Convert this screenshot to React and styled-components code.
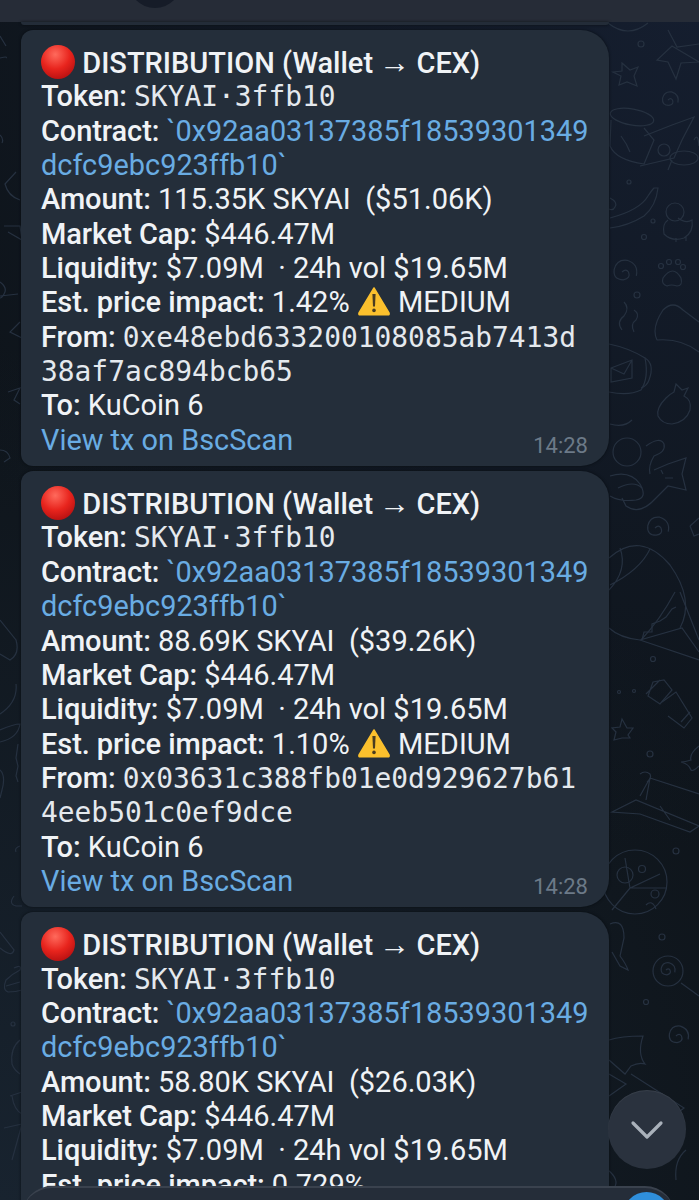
import React from "react";
import styled, { createGlobalStyle } from "styled-components";

const messages = [
  {
    id: 1,
    amount: "115.35K SKYAI",
    usd: "$51.06K",
    impact: "1.42%",
    level: "MEDIUM",
    from: ["0xe48ebd633200108085ab7413d", "38af7ac894bcb65"],
  },
  {
    id: 2,
    amount: "88.69K SKYAI",
    usd: "$39.26K",
    impact: "1.10%",
    level: "MEDIUM",
    from: ["0x03631c388fb01e0d929627b61", "4eeb501c0ef9dce"],
  },
  {
    id: 3,
    amount: "58.80K SKYAI",
    usd: "$26.03K",
    impact: "0.729%",
    level: "",
    from: ["0x03631c388fb01e0d929627b61", "4eeb501c0ef9dce"],
  },
];

function RedCircle() {
  return (
    <EmojiSvg viewBox="0 0 34 34" width="34" height="34">
      <defs>
        <radialGradient id="redBall" cx="42%" cy="28%" r="78%">
          <stop offset="0%" stopColor="#ff6a5c" />
          <stop offset="55%" stopColor="#e8241d" />
          <stop offset="100%" stopColor="#b30f10" />
        </radialGradient>
      </defs>
      <circle cx="17" cy="17" r="17" fill="url(#redBall)" />
    </EmojiSvg>
  );
}

function WarningSign() {
  return (
    <EmojiSvg viewBox="0 0 34 30" width="34" height="30" $warn>
      <path
        d="M17 2 L32 27 Q32.6 28.8 31 28.8 L3 28.8 Q1.4 28.8 2 27 Z"
        fill="#fbc02d"
        stroke="#fbc02d"
        strokeWidth="1.5"
        strokeLinejoin="round"
      />
      <path d="M15.4 8 h3.2 l-.6 12.5 h-2 Z" fill="#4a3c20" />
      <circle cx="17" cy="24.4" r="1.8" fill="#4a3c20" />
    </EmojiSvg>
  );
}

const swirl = (x, y, s) =>
  `M${x} ${y} q${3 * s} ${-3 * s} ${5 * s} 0 q${2 * s} ${5 * s} ${-4 * s} ${6 * s} q${-8 * s} 0 ${-7 * s} ${-8 * s} q${2 * s} ${-8 * s} ${10 * s} ${-7 * s} q${9 * s} ${3 * s} ${7 * s} ${12 * s}`;

function Doodles() {
  return (
    <DoodleSvg viewBox="0 0 699 1200" width="699" height="1200" fill="none">
      {/* top right: arc, stars, bucket with cat */}
      <path d="M608 23 q20 16 40 0" />
      <circle cx="641" cy="44" r="3" />
      <path d="M668 30 L677 47 L699 44 M699 62 L681 63 L676 79 L668 62 L657 60 L672 46 Z" />
      <path d="M622 63 L630 70 L638 67 L634 76 L637 86 L627 82 L619 85 L621 76 L613 72 L622 71 Z" />
      <path d={swirl(668, 100, 0.9)} />
      <ellipse cx="632" cy="117" rx="22" ry="8" transform="rotate(10 632 117)" />
      <path d="M611 120 L610 146 Q616 160 644 164 L654 140 L644 128" />
      <path d="M621 136 q6 8 9 16 M644 136 L672 125 L694 117 L682 140 L674 158 L640 166" />
      <circle cx="664" cy="150" r="6" />
      <ellipse cx="684" cy="158" rx="14" ry="7" />
      <path d="M694 140 q4 -8 5 6 M668 170 l4 -10" />
      <circle cx="629" cy="182" r="2" />
      {/* tube, duck, paw */}
      <path d="M610 218 q30 -8 38 -22 q4 -6 6 -8 l4 0 q-2 18 -14 28 q-16 10 -34 12" />
      <path d="M610 198 q8 4 5 9 q-2 4 -6 2" />
      <circle cx="653" cy="221" r="2" />
      <circle cx="644" cy="237" r="2.5" />
      <circle cx="675" cy="212" r="9" />
      <path d="M668 220 q-6 4 -4 14 q8 8 20 4 q10 -6 8 -18 q-6 4 -14 -2 M676 238 v4 M686 236 v5" />
      <path d={swirl(622, 272, 1.3)} />
      <circle cx="661" cy="266" r="2.5" />
      <circle cx="669" cy="262" r="2.5" />
      <circle cx="678" cy="262" r="2.5" />
      <circle cx="683" cy="267" r="2.5" />
      <path d="M663 278 q10 -14 18 0 q2 8 -4 8 q-6 -2 -10 0 q-6 -2 -4 -8 Z" />
      <circle cx="637" cy="295" r="3" />
      {/* hat, cup, strawberry */}
      <path d="M657 340 q-6 -12 6 -30 q10 -10 20 0 l16 12 M657 340 q24 -2 42 12" />
      <path d="M622 330 q-6 -8 2 -14 q6 -8 0 -14 M634 332 q-4 -8 2 -12 q4 -6 -2 -10" />
      <path d="M609 344 q20 4 36 14 q4 20 -4 32 q-12 6 -32 2" />
      <path d="M645 358 q10 6 4 22 q-2 6 -8 8" />
      <path d="M611 368 L632 360 L632 378 L611 382 Z M611 368 L624 374 L632 360" />
      <path d="M666 398 q-10 10 -8 18 q4 8 14 8 q14 -2 18 -14 q2 -10 -6 -14 l4 -8 -6 2 -6 -6 -2 8 q-4 2 -8 6 Z" />
      {/* astronaut planet and cat */}
      <circle cx="627" cy="452" r="14" />
      <path d="M610 424 q14 4 22 -4 M646 446 q14 -10 18 -2 q2 8 -10 12 q-6 10 -4 18" />
      <path d="M654 470 L668 464 L686 458 L682 474 L686 490 L668 486 L656 498 Q640 516 626 506 L622 498 M610 476 q20 -6 30 8 q8 14 -4 16 q-16 2 -26 -4" />
      <path d="M618 488 q16 -8 24 0 M661 470 l2 4 M665 478 h8" />
      <path d={swirl(655, 528, 1.2)} />
      <path d="M690 526 L699 518 M690 526 L694 536 L699 534" />
      {/* balloon */}
      <path d="M609 558 Q640 530 670 565 Q695 600 680 628" />
      <path d="M620 548 Q628 570 609 590 M650 549 Q640 570 610 585" />
      <path d="M609 628 Q620 638 640 640 L699 660 M640 640 L682 628 L699 652 M641 640 Q660 620 675 592" />
      <path d="M642 640 l2 -8 8 0 0 -8 8 -3 6 -4 6 -8 4 -2 M680 592 L699 640" />
      {/* flashlight */}
      <path d="M653 682 L664 680 L672 690 L660 704 L648 696 Z M646 694 L660 680" />
      <path d="M662 702 L676 692 L692 718 L684 728 L668 716" />
      <path d="M681 722 L690 712" />
      <circle cx="653" cy="659" r="2.5" />
      <circle cx="619" cy="692" r="1.5" />
      <circle cx="634" cy="691" r="1.5" />
      <path d="M622 719 L627 728 L633 728 L628 735 L630 738 L622 738 L614 740 L616 732 L612 728 L620 727 Z" />
      <circle cx="650" cy="754" r="3" />
      <path d="M699 746 q-10 8 -8 14 q-6 2 -10 2 q8 2 10 8 q2 2 8 -4" />
      <path d="M640 774 q5 -4 10 0 q2 5 -3 8 M650 778 L699 794 M640 796 L650 778 L646 800" />
      {/* pizza, lollipop, swirl */}
      <path d="M612 812 L636 800 L699 826 L690 832 L640 814 Z M660 806 l10 14" />
      <circle cx="635" cy="882" r="32" />
      <path d="M625 858 L630 888 L660 874 M630 888 L666 888 M630 888 L612 910" />
      <circle cx="642" cy="869" r="3.5" />
      <circle cx="655" cy="894" r="4" />
      <circle cx="625" cy="875" r="8" />
      <path d="M646 905 q6 -6 10 4" />
      <circle cx="676" cy="851" r="3" />
      <circle cx="662" cy="937" r="3" />
      <path d="M610 924 q14 -6 14 14 l-4 18 q6 8 8 14 L620 966 L612 952" />
      <circle cx="668" cy="971" r="15" />
      <path d={swirl(666, 970, 0.8)} />
      <path d="M681 983 L699 996" />
      <circle cx="646" cy="1002" r="2.5" />
      <path d={swirl(676, 1036, 1.1)} />
      <path d="M609 1040 q12 -4 34 -4 q-6 18 2 28 q-6 -2 -14 2 L625 1074 L609 1060" />
      <path d="M631 1074 L684 1108 L676 1114 M609 1074 L626 1084 L609 1096" />
      <path d="M686 1150 q-12 10 -10 30 M608 1170 q12 10 6 18" />
      {/* left strip */}
      <path d="M0 36 l6 10 M0 58 q8 -2 6 0 M0 135 q4 4 2 8" />
      <path d="M16 172 L5 184 Q8 196 20 200 M4 226 L20 226 L22 240 L8 232 M0 282 q8 6 4 12 q-2 4 -4 4 M0 296 L18 294" />
      <path d="M20 322 L10 332 L22 338 M8 392 L20 388 L14 400 L20 404 M0 450 q8 0 10 8 L4 462" />
      <path d="M0 620 L16 640 Q20 654 10 660 L0 654" />
      <path d="M16 684 q2 18 -16 30 M0 730 q14 -6 20 -6 q-2 14 -20 18" />
      <path d="M18 744 l-2 14 2 8 -2 10 2 6 M0 770 q6 6 2 20 L0 798" />
      <path d="M20 846 q-6 2 -4 6 M14 896 q-6 8 2 10 L22 906" />
      <path d="M0 932 L14 950 Q12 958 0 948" />
      <path d="M14 968 q8 -4 6 2 q-8 4 -14 10 q-4 10 2 12 q8 0 14 -2 M20 982 L6 986" />
      <circle cx="13" cy="1024" r="2" />
      <path d="M20 1040 q-10 8 -8 24 q2 6 8 10" />
      <path d="M10 1096 L22 1092 M12 1096 q2 14 10 18 M4 1128 L22 1124 L12 1160" />
    </DoodleSvg>
  );
}

export default function App() {
  return (
    <>
      <GlobalStyle />
      <Page>
        <Doodles />
        <TopBar>
          <TopAvatar />
        </TopBar>
        <MessageList>
          <PrevBubble />
          {messages.map((m) => (
            <Bubble key={m.id}>
              <Line $medium>
                <RedCircle /> DISTRIBUTION (Wallet <Arrow>→</Arrow> CEX)
              </Line>
              <Line>
                <Label>Token:</Label> <Mono>SKYAI·3ffb10</Mono>
              </Line>
              <Line>
                <Label>Contract:</Label>{" "}
                <LinkText>`0x92aa03137385f18539301349</LinkText>
              </Line>
              <Line>
                <LinkText>dcfc9ebc923ffb10`</LinkText>
              </Line>
              <Line>
                <Label>Amount:</Label> {m.amount} {"\u00a0"}({m.usd})
              </Line>
              <Line>
                <Label>Market Cap:</Label> $446.47M
              </Line>
              <Line>
                <Label>Liquidity:</Label> $7.09M {"\u00a0"}· 24h vol $19.65M
              </Line>
              <Line>
                <Label>Est. price impact:</Label> {m.impact}
                {m.level && (
                  <>
                    {" "}
                    <WarningSign /> {m.level}
                  </>
                )}
              </Line>
              <Line>
                <Label>From:</Label> <Mono>{m.from[0]}</Mono>
              </Line>
              <Line>
                <Mono>{m.from[1]}</Mono>
              </Line>
              <Line>
                <Label>To:</Label> KuCoin 6
              </Line>
              <Line>
                <LinkText>View tx on BscScan</LinkText>
              </Line>
              <Time>14:28</Time>
            </Bubble>
          ))}
        </MessageList>
        <ScrollDown>
          <svg width="34" height="24" viewBox="0 0 34 24" fill="none">
            <path
              d="M3 5 L17 19 L31 5"
              stroke="#a9b1ba"
              strokeWidth="3.2"
              strokeLinecap="round"
              strokeLinejoin="round"
            />
          </svg>
        </ScrollDown>
        <InputBar>
          <SendDot />
        </InputBar>
      </Page>
    </>
  );
}

const GlobalStyle = createGlobalStyle`
  html, body {
    margin: 0;
    padding: 0;
    background: #111820;
  }
`;

const Page = styled.div`
  position: relative;
  display: flex;
  flex-direction: column;
  width: 699px;
  height: 1200px;
  overflow: hidden;
  background:
    radial-gradient(circle 850px at 100% 0%, #151e2f 0%, rgba(21, 30, 47, 0) 100%),
    radial-gradient(circle 850px at 0% 100%, #18232f 0%, rgba(24, 35, 47, 0) 100%),
    #0e141a;
  font-family: Roboto, "Liberation Sans", sans-serif;
  font-size: 29px;
  color: #f0f3f6;
`;

const DoodleSvg = styled.svg`
  position: absolute;
  top: 0;
  left: 0;
  stroke: #263140;
  stroke-width: 1.2;
  filter: blur(0.4px);
`;

const TopBar = styled.header`
  position: relative;
  flex: none;
  display: flex;
  height: 22px;
  background: #262c37;
  overflow: hidden;
`;

const TopAvatar = styled.div`
  width: 54px;
  height: 54px;
  margin: -46px 0 0 128px;
  border-radius: 50%;
  background: #161c28;
`;

const MessageList = styled.main`
  position: relative;
  display: flex;
  flex-direction: column;
  gap: 5px;
  padding: 0 90px 0 21px;
`;

const PrevBubble = styled.div`
  flex: none;
  height: 3px;
  background: #232c38;
  border-radius: 0 0 12px 12px;
  box-shadow: 0 0 3px rgba(4, 8, 12, 0.7);
`;

const Bubble = styled.article`
  position: relative;
  flex: none;
  padding: 15px 20px 9px;
  background: #242e3a;
  border-radius: 12px 28px 28px 12px;
  box-shadow: 0 0 3px rgba(4, 8, 12, 0.7);
`;

const Line = styled.div`
  height: 34.35px;
  line-height: 34.35px;
  white-space: pre;
  font-weight: ${(p) => (p.$medium ? 500 : 400)};
`;

const Label = styled.span`
  font-weight: 500;
  letter-spacing: -0.08px;
`;

const Arrow = styled.span`
  font-family: "Liberation Sans", sans-serif;
  font-weight: 700;
  font-size: 31px;
  margin: 0 -1px;
`;

const Mono = styled.span`
  font-family: "DejaVu Sans Mono", "Liberation Mono", monospace;
  font-size: 27.9px;
  color: #e4e9ee;
`;

const LinkText = styled.span`
  color: #69ace3;
  font-size: 28.9px;
`;

const EmojiSvg = styled.svg`
  display: inline-block;
  vertical-align: ${(p) => (p.$warn ? "-4px" : "-6px")};
`;

const Time = styled.span`
  position: absolute;
  right: 21px;
  bottom: 7px;
  font-size: 22px;
  line-height: 26px;
  color: #6c7a88;
`;

const ScrollDown = styled.div`
  position: absolute;
  left: 608px;
  top: 1090px;
  display: flex;
  align-items: center;
  justify-content: center;
  width: 78px;
  height: 79px;
  border-radius: 50%;
  background: #2a323e;
  box-shadow: inset 0 1px 1px rgba(255, 255, 255, 0.07);
`;

const InputBar = styled.div`
  position: absolute;
  left: 22px;
  bottom: -40px;
  width: 653px;
  height: 52px;
  background: #252d39;
  border-top: 2px solid #3a424e;
  border-top-left-radius: 30px;
  border-top-right-radius: 30px;
  overflow: hidden;
`;

const SendDot = styled.div`
  position: absolute;
  top: 4px;
  left: 601px;
  width: 47px;
  height: 47px;
  border-radius: 50%;
  background: #2f8fdc;
`;
